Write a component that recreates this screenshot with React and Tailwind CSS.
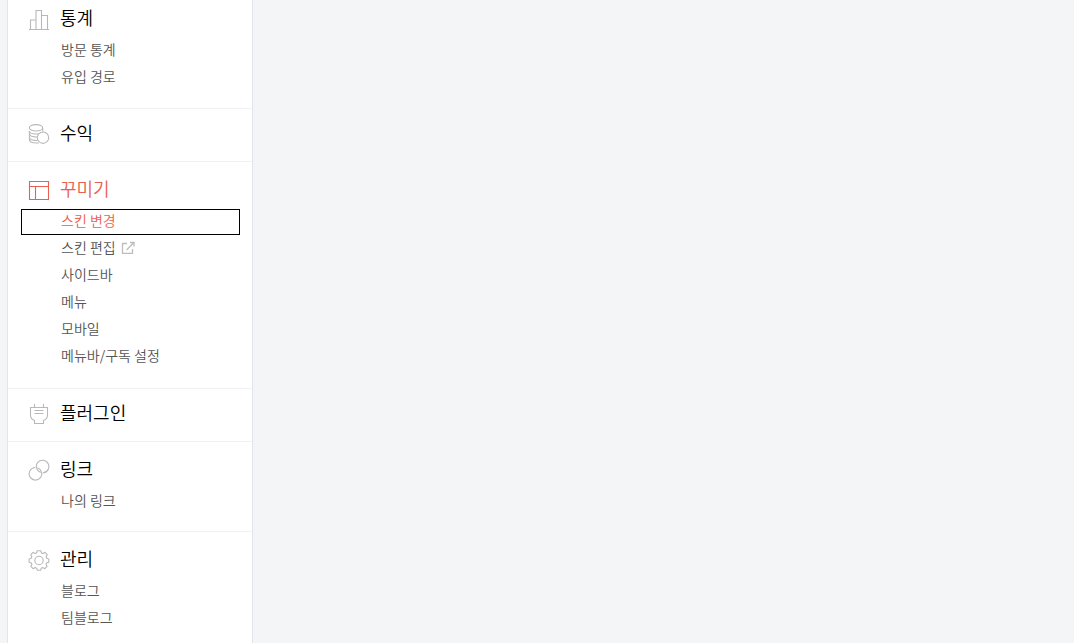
import React from 'react';
import clsx from 'clsx';

const iconProps = {
  width: 22,
  height: 22,
  viewBox: '0 0 22 22',
  fill: 'none',
  stroke: 'currentColor',
  strokeWidth: 1.1,
  'aria-hidden': true,
};

function ChartIcon() {
  return (
    <svg {...iconProps}>
      <path d="M1 21.5h20M2.5 21.5V12H8M8 21.5v-19h5.5v19M13.5 7.5h6v14" />
    </svg>
  );
}

function CoinsIcon() {
  return (
    <svg {...iconProps}>
      <ellipse cx="8" cy="4.8" rx="6.7" ry="3.2" />
      <path d="M1.3 8c.2 1.700 3 3 6.700 3 1 0 1.900-.1 2.700-.3M14.700 5v3.500" />
      <path d="M1.300 8c-.3 3.500 0 6.200 8 6" />
      <path d="M1.300 11.500c-.3 3.500 0 6.200 8.300 6" />
      <path d="M1.300 15c-.3 3.500 1.500 5.500 9.500 5" />
      <circle cx="15" cy="14.7" r="5.7" />
    </svg>
  );
}

function LayoutIcon() {
  return (
    <svg {...iconProps}>
      <path d="M1.5 2.5h19v18h-19zM1.5 7.5h19M7.5 7.5v13" />
    </svg>
  );
}

function PlugIcon() {
  return (
    <svg {...iconProps}>
      <path d="M6.5 1v3.5M15.5 1v3.5" />
      <path d="M2.5 4.5h17V12c0 2.5-1.5 4.5-4 5.500v3h-9v-3c-2.500-1-4-3-4-5.500z" />
      <path d="M6.500 7.500h9M6.500 10.500h9" />
    </svg>
  );
}

function LinkIcon() {
  return (
    <svg {...iconProps}>
      <path d="M12.600 13.500A6.300 6.300 0 1 1 15 13.800" />
      <path d="M9.400 8.800A6.300 6.300 0 1 1 7.200 8.500" />
    </svg>
  );
}

function GearIcon() {
  return (
    <svg {...iconProps}>
      <circle cx="11" cy="11.5" r="4.2" />
      <path
        strokeLinejoin="round"
        d="M9.200 1.700h3.600l.7 2.300 1.300.6 2.200-1.200 2.200 2.200-1 2.200.6 1.500 2 .7v3.200l-2.200.7-.6 1.400 1.100 2.100-2.300 2.300-2.100-1.100-1.400.6-.7 2H9.400l-.8-2-1.400-.6-2.100 1.100-2.300-2.300 1.100-2.100-.6-1.400-2.200-.7V10l2.100-.7.6-1.500-1.100-2.200L5 3.400l2.200 1.200 1.300-.6z"
      />
    </svg>
  );
}

function ExternalIcon() {
  return (
    <svg
      width="14"
      height="14"
      viewBox="0 0 14 14"
      fill="none"
      stroke="#bdbdbd"
      strokeWidth="1.3"
      aria-hidden="true"
    >
      <path d="M6 3.500H1.500v10h10V9M9 2.500h4v4M13 2.500l-7.500 7.500" />
    </svg>
  );
}

const MENU = [
  {
    title: '통계',
    icon: ChartIcon,
    items: [{ label: '방문 통계' }, { label: '유입 경로' }],
  },
  { title: '수익', icon: CoinsIcon, items: [] },
  {
    title: '꾸미기',
    icon: LayoutIcon,
    active: true,
    items: [
      { label: '스킨 변경', active: true },
      { label: '스킨 편집', external: true },
      { label: '사이드바' },
      { label: '메뉴' },
      { label: '모바일' },
      { label: '메뉴바/구독 설정' },
    ],
  },
  { title: '플러그인', icon: PlugIcon, items: [] },
  { title: '링크', icon: LinkIcon, items: [{ label: '나의 링크' }] },
  {
    title: '관리',
    icon: GearIcon,
    items: [{ label: '블로그' }, { label: '팀블로그' }],
  },
];

function MenuItem({ item }) {
  return (
    <li className="pb-px">
      <a
        href="#"
        aria-current={item.active ? 'page' : undefined}
        className={clsx(
          'flex h-[26px] items-center gap-[5px] pb-1 pl-10 text-sm',
          item.active
            ? 'text-[#e8604f] outline outline-1 -outline-offset-1 outline-black'
            : 'text-[#555]'
        )}
      >
        {item.label}
        {item.external && <ExternalIcon />}
      </a>
    </li>
  );
}

function sectionPadding(count) {
  if (count === 0) return 'pt-3 pb-[14px]';
  if (count === 1) return 'pt-[15px] pb-[15px]';
  return 'pt-[15px] pb-[17px] first:pt-[6px] first:pb-4';
}

function MenuSection({ section }) {
  const Icon = section.icon;

  return (
    <section
      className={clsx(
        'border-b border-[#eff2f5] last:border-b-0',
        sectionPadding(section.items.length)
      )}
    >
      <h2
        className={clsx(
          'flex h-[26px] items-center gap-[10px] pl-5 text-lg font-[350]',
          section.active ? 'text-[#e8604f]' : 'text-black'
        )}
      >
        <span className={section.active ? 'text-[#e8604f]' : 'text-[#b8b8b8]'}>
          <Icon />
        </span>
        <span className="pb-1">{section.title}</span>
      </h2>
      {section.items.length > 0 && (
        <ul className="mt-[6px] mr-3 ml-[13px] font-[350]">
          {section.items.map((item) => (
            <MenuItem key={item.label} item={item} />
          ))}
        </ul>
      )}
    </section>
  );
}

export default function App() {
  return (
    <div className="flex h-screen overflow-hidden bg-[#f3f5f7] pl-[7px] font-['Noto_Sans_CJK_KR',sans-serif]">
      <nav className="w-[246px] shrink-0 border-x border-[#e0e5ed] bg-white">
        {MENU.map((section) => (
          <MenuSection key={section.title} section={section} />
        ))}
      </nav>
      <main className="flex-1 border-r border-white" />
    </div>
  );
}
